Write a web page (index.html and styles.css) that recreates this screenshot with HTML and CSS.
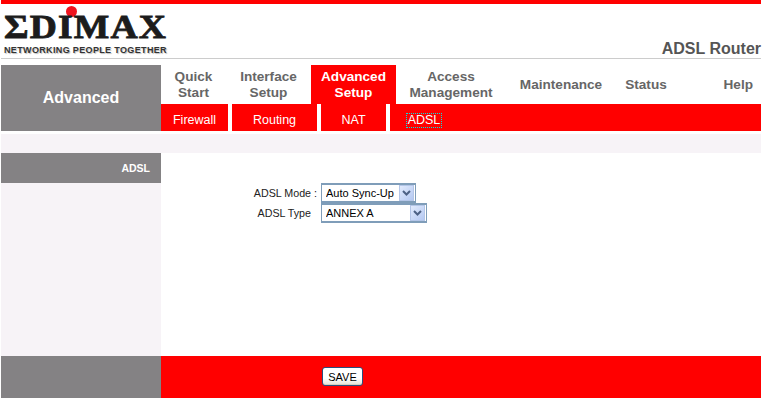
FILE: index.html
```html
<!DOCTYPE html>
<html lang="en">
<head>
<meta charset="utf-8">
<title>ADSL Router</title>
<link rel="stylesheet" href="styles.css">
</head>
<body>
<div class="page">
  <div class="topbar"></div>
  <header class="brand">
    <div class="logo">
      <span class="logo-dot"></span>
      <div class="logo-word">ΣDIMAX</div>
      <div class="logo-tag">NETWORKING PEOPLE TOGETHER</div>
    </div>
    <div class="product">ADSL Router</div>
  </header>
  <div class="rule"></div>
  <div class="navblock">
    <div class="section-title">Advanced</div>
    <div class="navmain">
      <nav class="tabs">
        <a class="tab t-quick">Quick<br>Start</a>
        <a class="tab t-iface">Interface<br>Setup</a>
        <a class="tab t-adv active">Advanced<br>Setup</a>
        <a class="tab t-access">Access<br>Management</a>
        <a class="tab t-maint">Maintenance</a>
        <a class="tab t-status">Status</a>
        <a class="tab t-help">Help</a>
      </nav>
      <nav class="subtabs">
        <a class="sub s-fw">Firewall</a>
        <a class="sub s-rt">Routing</a>
        <a class="sub s-nat">NAT</a>
        <a class="sub s-adsl"><span class="focus">ADSL</span></a>
      </nav>
    </div>
  </div>
  <div class="band"></div>
  <div class="content">
    <aside class="side">
      <div class="side-head">ADSL</div>
    </aside>
    <main class="form">
      <div class="row">
        <label class="lbl" for="mode">ADSL Mode :</label>
        <div class="sel sel-mode">
          <select id="mode"><option>Auto Sync-Up</option></select>
          <span class="arrow"><svg width="9" height="6" viewBox="0 0 9 6"><path d="M1 1l3.500 3.500L8 1" fill="none" stroke="#4d6185" stroke-width="2"/></svg></span>
        </div>
      </div>
      <div class="row">
        <label class="lbl lbl-type" for="type">ADSL Type</label>
        <div class="sel sel-type">
          <select id="type"><option>ANNEX A</option></select>
          <span class="arrow"><svg width="9" height="6" viewBox="0 0 9 6"><path d="M1 1l3.500 3.500L8 1" fill="none" stroke="#4d6185" stroke-width="2"/></svg></span>
        </div>
      </div>
    </main>
  </div>
  <footer class="foot">
    <div class="foot-side"></div>
    <div class="foot-main"><button class="save" type="button">SAVE</button></div>
  </footer>
</div>
</body>
</html>
```
FILE: styles.css
```css
* { box-sizing: border-box; }
html, body { margin: 0; padding: 0; background: #fff; }
body { font-family: "Liberation Sans", Arial, sans-serif; font-size: 11px; overflow: hidden; }
.page { width: 760px; margin-left: 1px; height: 398px; display: flex; flex-direction: column; }
.topbar { height: 4px; background: #f00; }

.brand { height: 54px; display: flex; justify-content: space-between; align-items: flex-end; }
.logo { position: relative; width: 170px; height: 54px; margin-left: 3px; }
.logo-dot { position: absolute; left: 62px; top: 2px; width: 11px; height: 11px; border-radius: 50%; background: #f0141e; }
.logo-word { position: absolute; left: 0; top: 12px; font-family: "Liberation Serif", serif; font-weight: bold; font-size: 33px; line-height: 22px; letter-spacing: 1px; color: #1c1c1c; transform-origin: left top; transform: scale(1.14, 1); white-space: nowrap; -webkit-text-stroke: 0.8px #1c1c1c; }
.logo-tag { position: absolute; left: 0; top: 42px; font-weight: bold; font-size: 9px; line-height: 9px; letter-spacing: 0.35px; color: #333; white-space: nowrap; text-shadow: 1px 1px 1px #bbb; }
.product { font-weight: bold; font-size: 16px; line-height: 18px; color: #555; }

.rule { height: 1px; background: #ccc; margin-bottom: 6px; }

.navblock { display: flex; height: 66px; }
.section-title { width: 160px; background: #848284; color: #fff; font-weight: bold; font-size: 16px; display: flex; align-items: center; justify-content: center; }
.navmain { width: 600px; display: flex; flex-direction: column; }
.tabs { display: flex; height: 39px; }
.tab { display: flex; align-items: center; justify-content: center; text-align: center; font-weight: bold; font-size: 13.6px; line-height: 16px; color: #666; }
.tab.active { background: #f00; color: #fff; }
.t-quick { width: 65px; }
.t-iface { width: 85px; }
.t-adv { width: 85px; }
.t-access { width: 110px; }
.t-maint { width: 110px; }
.t-status { width: 60px; }
.t-help { width: 85px; justify-content: flex-end; padding-right: 8px; }

.subtabs { display: flex; height: 27px; background: #f00; }
.sub { display: flex; align-items: center; justify-content: center; color: #fff; font-size: 12.5px; padding-top: 5px; border-right: 4px solid #fff; }
.s-fw { width: 71px; }
.s-rt { width: 89px; }
.s-nat { width: 69px; }
.s-adsl { border-right: 0; width: 68px; }
.focus { outline: 1px dotted #00e5e5; line-height: 13px; padding: 0 1px; }

.band { height: 19px; margin-top: 3px; background: #f7f3f7; }
.content { display: flex; height: 203px; }
.side { width: 160px; background: #f7f3f7; }
.side-head { height: 30px; background: #848284; color: #fff; font-weight: bold; font-size: 10.5px; display: flex; align-items: center; justify-content: flex-end; padding-right: 11px; }
.form { flex: 1; padding-top: 30px; }
.row { display: flex; height: 20px; }
.lbl { width: 160px; text-align: right; padding-right: 4px; font-size: 10.7px; line-height: 20px; color: #222; }
.lbl-type { padding-right: 10px; }
.sel { position: relative; height: 20px; }
.sel-mode { width: 95px; }
.sel-type { width: 106px; }
.sel select { appearance: none; -webkit-appearance: none; display: block; width: 100%; height: 100%; border: 1px solid #7f9db9; border-width: 2px 1px; border-radius: 0; background: #fff; padding: 0 0 0 4px; font: 11px/16px "Liberation Sans", Arial, sans-serif; color: #000; outline: 0; }
.arrow { position: absolute; right: 2px; top: 2px; bottom: 2px; width: 15px; border: 1px solid #b4c6e8; background: linear-gradient(135deg, #e2ebfd, #b4c8f2); display: flex; align-items: center; justify-content: center; pointer-events: none; }

.foot { display: flex; height: 42px; }
.foot-side { width: 160px; background: #848284; }
.foot-main { flex: 1; background: #f00; padding: 11px 0 0 161px; }
.save { display: block; width: 41px; height: 19px; padding: 0; border: 1px solid #2a4f7d; border-radius: 3px; background: linear-gradient(#fff 60%, #e4e2d6); font: 11px "Liberation Sans", Arial, sans-serif; color: #000; box-shadow: inset 0 -1px 0 #d6d0c0; }
```
